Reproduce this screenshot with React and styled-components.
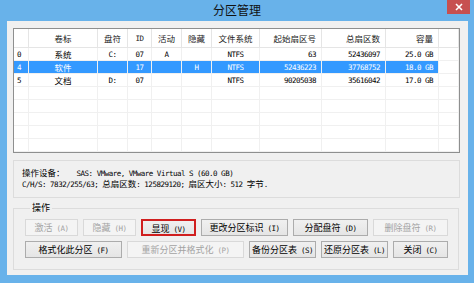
import React from 'react';
import styled, { createGlobalStyle } from 'styled-components';

const CJK = `"Noto Sans CJK SC", "Noto Sans", sans-serif`;
const MONO = `"DejaVu Sans Mono", "Liberation Mono", monospace`;

const Global = createGlobalStyle`
  html, body { margin: 0; padding: 0; background: #68b2ea; }
  body { width: 474px; height: 283px; overflow: hidden; }
`;

const Window = styled.div`
  width: 474px;
  height: 283px;
  box-sizing: border-box;
  background: #68b2ea;
  display: flex;
  flex-direction: column;
  font-family: ${CJK};
  color: #000;
`;

const TitleBar = styled.div`
  height: 21px;
  display: grid;
  grid-template-columns: 1fr auto 1fr;
  align-items: start;
`;

const Title = styled.div`
  grid-column: 2;
  font-size: 12px;
  line-height: 20px;
  color: #111;
`;

const Close = styled.div`
  grid-column: 3;
  justify-self: end;
  margin-right: 4px;
  width: 23px;
  height: 14px;
  background: #c75050;
  display: flex;
  align-items: center;
  justify-content: center;
`;

const Client = styled.div`
  flex: 1;
  margin: 0 6px 8px 7px;
  background: #f0f0f0;
  padding: 7px 8px 5px 6px;
  display: flex;
  flex-direction: column;
`;

const List = styled.div`
  height: 125px;
  box-sizing: border-box;
  border: 1px solid #8e8f8f;
  background: #fff;
  overflow: hidden;
`;

const COLS = '15px 69px 30px 24px 30px 30px 48px 62px 64px 53px 1fr';

const Row = styled.div`
  display: grid;
  grid-template-columns: ${COLS};
  height: ${(p) => (p.$head ? '19px' : '13px')};
`;

const Cell = styled.div`
  box-sizing: border-box;
  display: flex;
  align-items: center;
  justify-content: ${(p) =>
    p.$align === 'right' ? 'flex-end' : p.$align === 'left' ? 'flex-start' : 'center'};
  padding: 0 ${(p) => (p.$align === 'right' ? '5px' : '0')} 0
    ${(p) => (p.$align === 'left' ? '3px' : '0')};
  border-right: 1px solid ${(p) => (p.$head ? '#e5e5e5' : '#f0f0f0')};
  border-bottom: 1px solid ${(p) => (p.$head ? '#e5e5e5' : '#f0f0f0')};
  background: ${(p) => (p.$sel ? '#3399ff' : 'transparent')};
  color: ${(p) => (p.$sel ? '#fff' : p.$head ? '#222' : '#000')};
  font-family: ${(p) => (p.$mono ? MONO : CJK)};
  font-size: ${(p) => (p.$mono ? '7.5px' : '8.5px')};
  letter-spacing: ${(p) => (p.$mono ? '-0.5px' : '0')};
  white-space: pre;
  overflow: hidden;
`;

const InfoBox = styled.div`
  margin-top: 7px;
  height: 38px;
  box-sizing: border-box;
  border: 1px solid #dcdcdc;
  padding: 0 8px 2px;
  display: flex;
  flex-direction: column;
  justify-content: center;
`;

const Line = styled.div`
  height: 11px;
  line-height: 11px;
  font-size: 8.5px;
  white-space: pre;
`;

const M = styled.span`
  font-family: ${MONO};
  font-size: 7.5px;
  letter-spacing: -0.5px;
`;

const Group = styled.fieldset`
  margin: 4px 1px 0 0;
  padding: 5px 0 11px 11px;
  border: 1px solid #dcdcdc;
  flex: 1;
  display: flex;
  flex-direction: column;
  gap: 5px;
  min-width: 0;
`;

const Legend = styled.legend`
  font-size: 9px;
  line-height: 12px;
  padding: 0 2px;
  margin-left: 5px;
`;

const BtnRow = styled.div`
  display: flex;
  gap: 5px;
`;

const Btn = styled.div`
  box-sizing: border-box;
  width: ${(p) => p.$w}px;
  height: 17px;
  line-height: 15px;
  text-align: center;
  font-size: 9px;
  white-space: pre;
  border: ${(p) =>
    p.$mark ? '2px solid #d01f1f' : p.$off ? '1px solid #d9d9d9' : '1px solid #acacac'};
  background: ${(p) =>
    p.$off ? '#f4f4f4' : 'linear-gradient(#f0f0f0, #e5e5e5)'};
  color: ${(p) => (p.$off ? '#a3a3a3' : '#000')};
`;

const Key = styled.span`
  font-family: ${MONO};
  font-size: 7.5px;
  letter-spacing: -0.5px;
`;

const header = ['', '卷标', '盘符', 'ID', '活动', '隐藏', '文件系统', '起始扇区号', '总扇区数', '容量'];
const align = ['left', 'center', 'center', 'center', 'center', 'center', 'center', 'right', 'right', 'right'];
const data = [
  ['0', '系统', 'C:', '07', 'A', '', 'NTFS', '63', '52436097', '25.0 GB'],
  ['4', '软件', '', '17', '', 'H', 'NTFS', '52436223', '37768752', '18.0 GB'],
  ['5', '文档', 'D:', '07', '', '', 'NTFS', '90205038', '35616042', '17.0 GB'],
];
const SELECTED = 1;

const row1 = [
  { t: '激活', k: 'A', w: 53, off: true },
  { t: '隐藏', k: 'H', w: 53, off: true },
  { t: '显现', k: 'V', w: 55, mark: true },
  { t: '更改分区标识', k: 'I', w: 87 },
  { t: '分配盘符', k: 'D', w: 75 },
  { t: '删除盘符', k: 'R', w: 75, off: true },
];
const row2 = [
  { t: '格式化此分区', k: 'F', w: 97 },
  { t: '重新分区并格式化', k: 'P', w: 117, off: true },
  { t: '备份分区表', k: 'S', w: 67 },
  { t: '还原分区表', k: 'L', w: 67 },
  { t: '关闭', k: 'C', w: 55 },
];

function Button({ b }) {
  return (
    <Btn $w={b.w} $off={b.off} $mark={b.mark}>
      {b.t}
      <Key> ({b.k})</Key>
    </Btn>
  );
}

export default function App() {
  const empty = Array.from({ length: 6 }, () => Array(10).fill(''));
  return (
    <Window>
      <Global />
      <TitleBar>
        <Title>分区管理</Title>
        <Close>
          <svg width="8" height="8" viewBox="0 0 8 8">
            <path d="M1 1L7 7M7 1L1 7" stroke="#fff" strokeWidth="1.6" />
          </svg>
        </Close>
      </TitleBar>
      <Client>
        <List>
          <Row $head>
            {header.map((h, i) => (
              <Cell key={i} $head $align={align[i]} $mono={h === 'ID'}>
                {h}
              </Cell>
            ))}
            <Cell $head />
          </Row>
          {[...data, ...empty].map((r, ri) => (
            <Row key={ri}>
              {r.map((v, i) => (
                <Cell key={i} $align={align[i]} $mono={i !== 1} $sel={ri === SELECTED}>
                  {v}
                </Cell>
              ))}
              <Cell />
            </Row>
          ))}
        </List>
        <InfoBox>
          <Line>
            操作设备：<M>   SAS: VMware, VMware Virtual S (60.0 GB)</M>
          </Line>
          <Line>
            <M>C/H/S: 7832/255/63; </M>总扇区数<M>: 125829120; </M>扇区大小<M>: 512 </M>字节<M>.</M>
          </Line>
        </InfoBox>
        <Group>
          <Legend>操作</Legend>
          <BtnRow>
            {row1.map((b) => (
              <Button key={b.t} b={b} />
            ))}
          </BtnRow>
          <BtnRow>
            {row2.map((b) => (
              <Button key={b.t} b={b} />
            ))}
          </BtnRow>
        </Group>
      </Client>
    </Window>
  );
}
